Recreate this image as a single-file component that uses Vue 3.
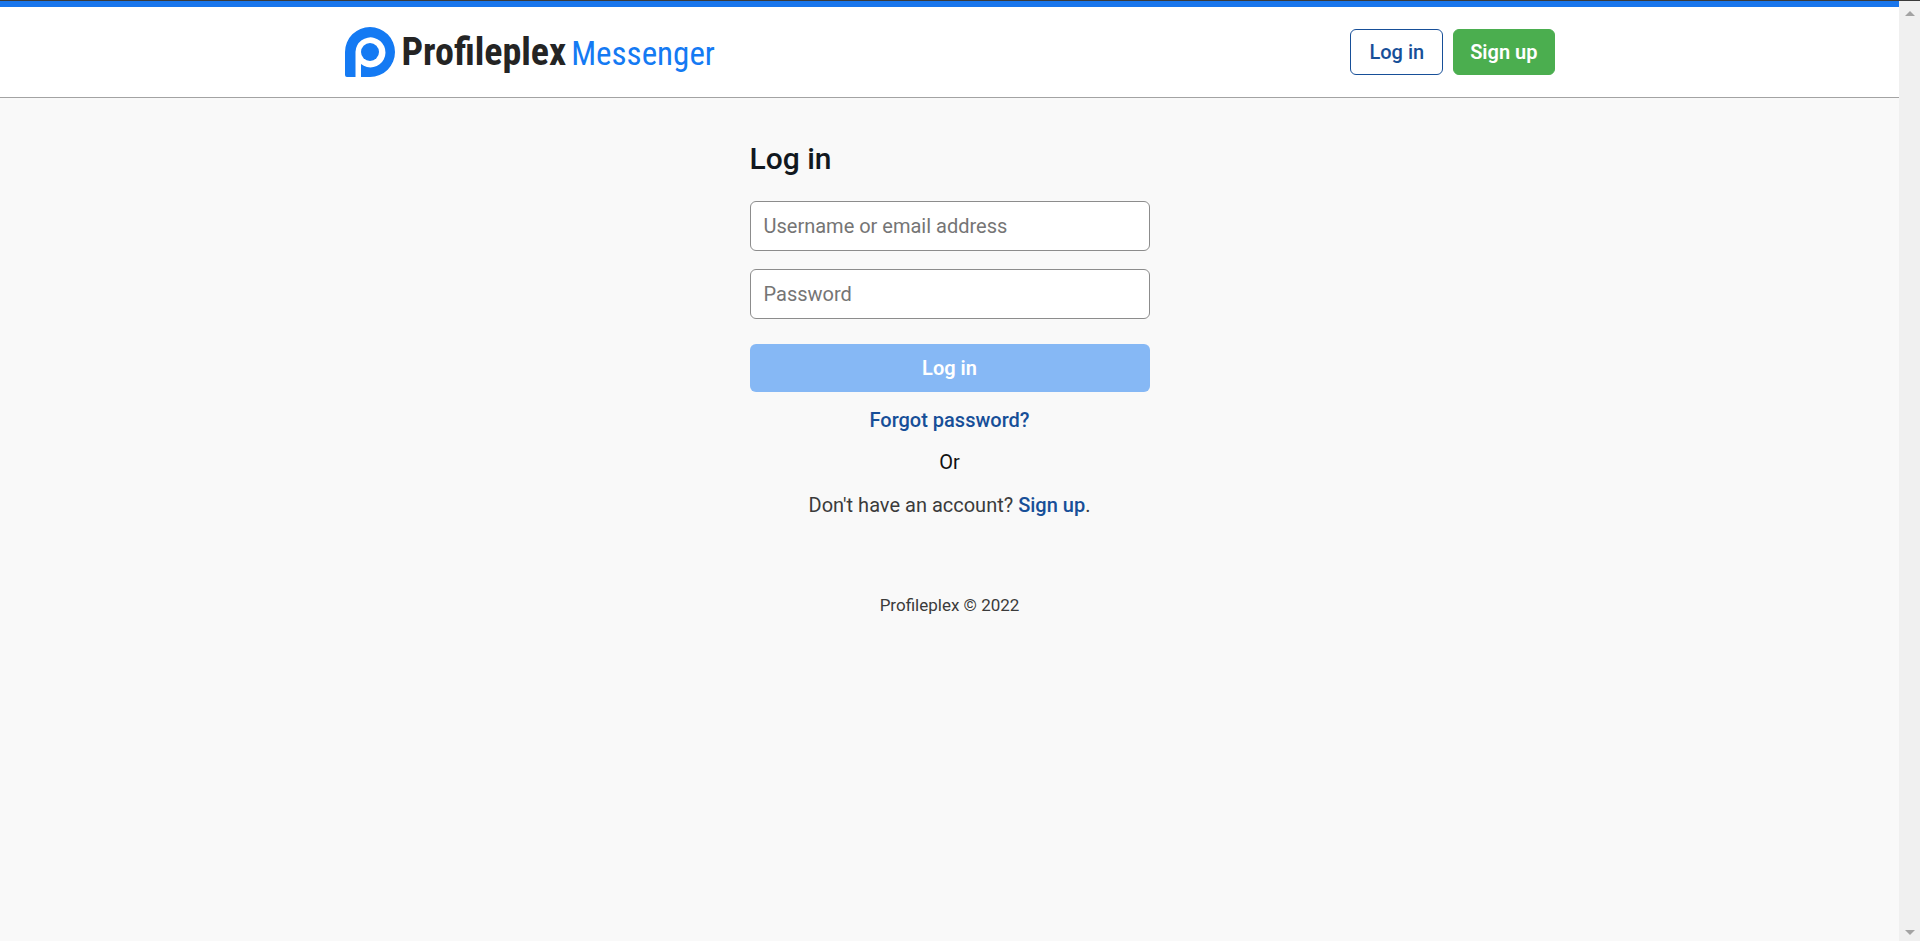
<script setup>
import { ref } from 'vue'

const username = ref('')
const password = ref('')
</script>

<template>
  <div class="window">
    <div class="page">
      <header class="topbar">
        <div class="container">
          <a class="brand" href="#" aria-label="Profileplex Messenger">
            <svg class="mark" viewBox="0 0 50 50" aria-hidden="true">
              <path fill="#147af3" d="M0 25a25 25 0 1 1 25 25H16V37a15 15 0 1 0-5.500-12.300V50H2a2 2 0 0 1-2-2Z" />
              <circle cx="25" cy="25" r="9" fill="#147af3" />
            </svg>
            <span class="wordmark">
              <span class="name">Profileplex</span>
              <span class="product">Messenger</span>
            </span>
          </a>
          <nav class="actions">
            <a class="btn outline" href="#login">Log in</a>
            <a class="btn green" href="#signup">Sign up</a>
          </nav>
        </div>
      </header>

      <main class="content">
        <form class="form" @submit.prevent>
          <h1>Log in</h1>
          <input v-model="username" class="field" type="text" aria-label="Username or email address" placeholder="Username or email address" />
          <input v-model="password" class="field" type="password" aria-label="Password" placeholder="Password" />
          <button class="submit" type="submit">Log in</button>
          <a class="link" href="#forgot">Forgot password?</a>
          <p class="or">Or</p>
          <p class="signup">Don't have an account? <a class="link" href="#signup">Sign up</a>.</p>
        </form>
        <footer>Profileplex © 2022</footer>
      </main>
    </div>
    <div class="scrollbar" aria-hidden="true">
      <svg viewBox="0 0 10 5"><path fill="#a3a3a3" d="M5 0l5 5H0Z" /></svg>
      <svg viewBox="0 0 10 5"><path fill="#a3a3a3" d="M0 0h10L5 5Z" /></svg>
    </div>
  </div>
</template>

<style>
body {
  background: #f9f9f9;
}
</style>

<style scoped>
.window {
  display: flex;
  box-sizing: border-box;
  min-height: 100vh;
  border-top: 1px solid #3b3b3b;
  background: #f9f9f9;
  font-family: Roboto, "Liberation Sans", sans-serif;
  font-size: 20px;
  line-height: 24px;
}
.page {
  flex: 1;
}
.topbar {
  padding: 20px 24px;
  border-top: 6px solid #1a76ec;
  border-bottom: 1px solid #a3a3a3;
  background: #fff;
}
.container {
  display: flex;
  align-items: center;
  justify-content: space-between;
  max-width: 1210px;
  margin: 0 auto;
}
.brand {
  display: flex;
  align-items: center;
  text-decoration: none;
}
.mark {
  width: 50px;
  height: 50px;
  margin-right: 7px;
}
.wordmark {
  display: flex;
  align-items: baseline;
  gap: 5px;
  padding-top: 2px;
  font-family: "Roboto Condensed", Roboto, sans-serif;
  line-height: 46px;
}
.name {
  color: #242424;
  font-size: 38px;
  font-weight: 700;
}
.product {
  color: #147af3;
  font-size: 33px;
}
.actions {
  display: flex;
  gap: 10px;
}
.btn {
  padding: 10px 16px;
  border: 1px solid #4bae4f;
  border-radius: 6px;
  font-weight: 500;
  text-decoration: none;
}
.outline {
  padding: 10px 18px;
  border-color: #174f98;
  background: #fff;
  color: #174f98;
}
.green {
  background: #4bae4f;
  color: #fff;
  font-weight: 600;
}
.content {
  padding: 41px 24px;
}
.form {
  display: flex;
  flex-direction: column;
  max-width: 400px;
  margin: 0 auto;
  text-align: center;
}
h1 {
  margin: 0 0 22px;
  color: #111820;
  font-size: 30px;
  font-weight: 500;
  line-height: 40px;
  text-align: left;
}
.field {
  box-sizing: border-box;
  width: 100%;
  height: 50px;
  margin-bottom: 18px;
  padding: 0 13px;
  border: 1px solid #8c8c8c;
  border-radius: 6px;
  background: #fff;
  color: #222;
  font: inherit;
}
.field::placeholder {
  color: #757575;
}
.submit {
  height: 48px;
  margin: 7px 0 16px;
  border: 0;
  border-radius: 6px;
  background: #86b8f5;
  color: #fff;
  font: inherit;
  font-weight: 600;
}
.link {
  color: #174f98;
  font-weight: 500;
  text-decoration: none;
}
p {
  margin: 18px 0 0;
}
.or {
  color: #111;
}
.signup {
  margin-top: 19px;
  color: #3b3b3b;
}
footer {
  margin-top: 76px;
  color: #3b3b3b;
  font-size: 17px;
  text-align: center;
}
.scrollbar {
  display: flex;
  flex-direction: column;
  align-items: center;
  justify-content: space-between;
  box-sizing: border-box;
  width: 21px;
  padding: 10px 0 6px;
  background: #f0f0f0;
}
.scrollbar svg {
  width: 10px;
  height: 5px;
}
</style>
